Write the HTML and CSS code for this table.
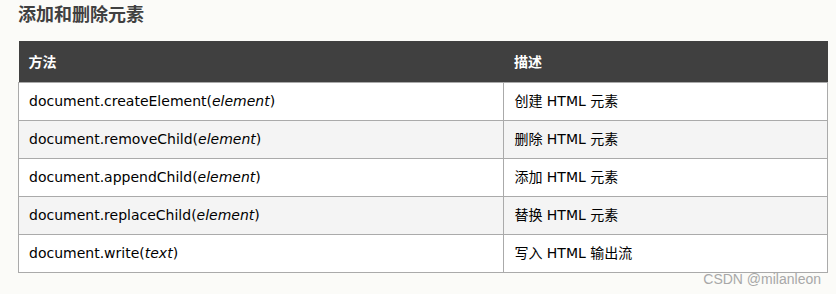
FILE: index.html
```html
<!DOCTYPE html>
<html lang="zh">
<head>
<meta charset="utf-8">
<link rel="stylesheet" href="styles.css">
</head>
<body>
<div class="page">
  <h2 class="title">添加和删除元素</h2>
  <table class="ref">
    <thead>
      <tr><th class="c1">方法</th><th class="c2">描述</th></tr>
    </thead>
    <tbody>
      <tr><td>document.createElement(<i>element</i>)</td><td>创建 HTML 元素</td></tr>
      <tr class="alt"><td>document.removeChild(<i>element</i>)</td><td>删除 HTML 元素</td></tr>
      <tr><td>document.appendChild(<i>element</i>)</td><td>添加 HTML 元素</td></tr>
      <tr class="alt"><td>document.replaceChild(<i>element</i>)</td><td>替换 HTML 元素</td></tr>
      <tr><td>document.write(<i>text</i>)</td><td>写入 HTML 输出流</td></tr>
    </tbody>
  </table>
  <div class="watermark">CSDN @milanleon</div>
</div>
</body>
</html>
```
FILE: styles.css
```css
html, body {
  margin: 0;
  padding: 0;
  background: #fbfbf8;
}
.page {
  position: relative;
  width: 836px;
  height: 294px;
  padding: 0 8px 0 18px;
  box-sizing: border-box;
  font-family: "DejaVu Sans", Verdana, "Noto Sans CJK SC", sans-serif;
  font-size: 14px;
  color: #000;
}
.title {
  margin: 0;
  padding-top: 4px;
  height: 41px;
  box-sizing: border-box;
  font-size: 18px;
  line-height: 22px;
  font-weight: bold;
  color: #404040;
  font-family: "DejaVu Sans", "Noto Sans CJK SC", sans-serif;
}
.ref {
  width: 810px;
  border-collapse: collapse;
  table-layout: fixed;
}
.ref th {
  background: #404040;
  color: #fff;
  text-align: left;
  font-weight: bold;
  height: 41px;
  padding: 0 10px;
  box-sizing: border-box;
  font-size: 14px;
}
.ref .c1 { width: 60%; }
.ref .c2 { width: 40%; }
.ref td {
  border: 1px solid #aaa;
  background: #fff;
  height: 38px;
  padding: 0 10px;
  box-sizing: border-box;
  line-height: 20px;
}
.ref tr.alt td { background: #f4f4f4; }
.ref i { font-style: italic; }
.watermark {
  position: absolute;
  right: 15px;
  top: 271px;
  font-family: "Liberation Sans", Arial, sans-serif;
  font-size: 14px;
  color: #a8a8a8;
  line-height: 16px;
}
```
